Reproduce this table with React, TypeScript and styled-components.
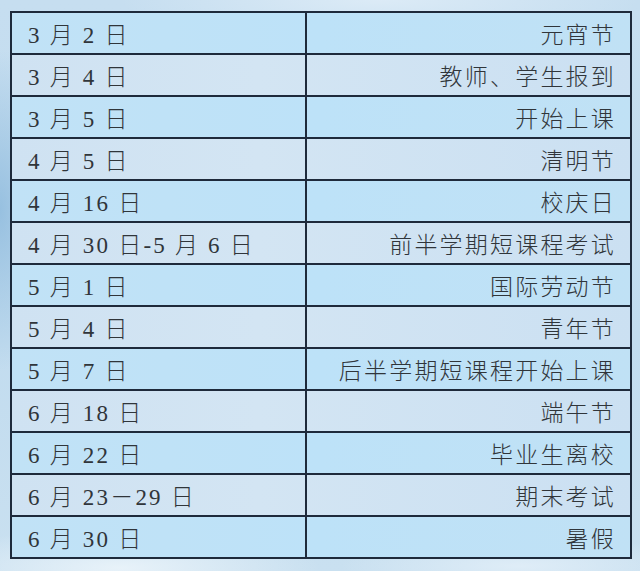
import * as React from 'react';
import styled, { createGlobalStyle } from 'styled-components';

interface Row {
  date: string;
  event: string;
}

const rows: Row[] = [
  { date: '3 月 2 日', event: '元宵节' },
  { date: '3 月 4 日', event: '教师、学生报到' },
  { date: '3 月 5 日', event: '开始上课' },
  { date: '4 月 5 日', event: '清明节' },
  { date: '4 月 16 日', event: '校庆日' },
  { date: '4 月 30 日-5 月 6 日', event: '前半学期短课程考试' },
  { date: '5 月 1 日', event: '国际劳动节' },
  { date: '5 月 4 日', event: '青年节' },
  { date: '5 月 7 日', event: '后半学期短课程开始上课' },
  { date: '6 月 18 日', event: '端午节' },
  { date: '6 月 22 日', event: '毕业生离校' },
  { date: '6 月 23－29 日', event: '期末考试' },
  { date: '6 月 30 日', event: '暑假' }
];

const GlobalStyle = createGlobalStyle`
  html, body {
    margin: 0;
    padding: 0;
  }
  body {
    font-family: "Noto Sans CJK SC", sans-serif;
  }
`;

const Page = styled.div`
  width: 640px;
  height: 571px;
  box-sizing: border-box;
  padding: 11px 8px 0 10px;
  background:
    radial-gradient(ellipse 60px 160px at 0px 210px, rgba(140, 185, 220, 0.8), transparent),
    radial-gradient(ellipse 200px 40px at 120px 568px, rgba(235, 244, 250, 0.9), transparent),
    radial-gradient(ellipse 180px 30px at 520px 566px, rgba(225, 238, 248, 0.9), transparent),
    radial-gradient(ellipse 260px 40px at 380px 0px, rgba(225, 238, 248, 0.8), transparent),
    linear-gradient(180deg, #c6def0 0%, #c2dcef 60%, #c9e0f0 100%);
`;

const Table = styled.table`
  width: 622px;
  border-collapse: collapse;
  border: 2px solid #1e2a3b;
  color: #30353a;
  font-family: "Noto Sans CJK SC", sans-serif;
  font-weight: 300;
  font-size: 23px;
  letter-spacing: 2.2px;
`;

const TableRow = styled.tr<{ $pale: boolean }>`
  background: ${(p) =>
    p.$pale
      ? 'linear-gradient(90deg, #cfe2f2 0%, #d3e5f3 40%, #cbe0f2 100%)'
      : 'linear-gradient(90deg, #c1e2f6 0%, #bde2f8 50%, #c0e1f5 100%)'};
`;

const Cell = styled.td<{ $align: 'left' | 'right' }>`
  border: 2px solid #1e2a3b;
  height: 40px;
  padding: 0 ${(p) => (p.$align === 'right' ? '14px' : '0')} 0 ${(p) => (p.$align === 'left' ? '16px' : '0')};
  text-align: ${(p) => p.$align};
  vertical-align: middle;
  line-height: 38px;
  white-space: nowrap;
`;

const DateCell = styled(Cell)`
  width: 277px;
`;

// digits and Latin marks of the date column, set in a Times-like serif
const Num = styled.span`
  font-family: "Liberation Serif", "Times New Roman", serif;
  font-weight: 400;
  line-height: 1;
`;

function renderDate(date: string) {
  return date
    .split(/([0-9\- ]+)/)
    .filter(Boolean)
    .map((part, idx) => (/[0-9\- ]/.test(part) ? <Num key={idx}>{part}</Num> : part));
}

export default function App() {
  return (
    <>
      <GlobalStyle />
      <Page>
        <Table>
          <tbody>
            {rows.map((r, idx) => (
              <TableRow key={idx} $pale={idx % 2 === 1}>
                <DateCell $align="left">{renderDate(r.date)}</DateCell>
                <Cell $align="right">{r.event}</Cell>
              </TableRow>
            ))}
          </tbody>
        </Table>
      </Page>
    </>
  );
}
